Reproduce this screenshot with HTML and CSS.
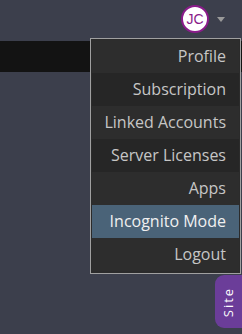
FILE: index.html
```html
<!DOCTYPE html>
<html lang="en">
<head>
    <meta charset="UTF-8">
    <meta name="viewport" content="width=device-width, initial-scale=1.0">
    <title>Account Menu</title>
    <link rel="stylesheet" href="styles.css">
</head>
<body>
    <div id="top-bar">
        <button id="user-button">
            <span class="avatar">JC</span>
            <span class="caret"></span>
        </button>
    </div>
    <div id="black-bar"></div>

    <div id="user-menu">
        <a href="#" class="menu-link">Profile</a>
        <a href="#" class="menu-link">Subscription</a>
        <a href="#" class="menu-link">Linked Accounts</a>
        <a href="#" class="menu-link">Server Licenses</a>
        <a href="#" class="menu-link">Apps</a>
        <a href="#" class="menu-link active">Incognito Mode</a>
        <a href="#" class="menu-link">Logout</a>
    </div>

    <div id="site-tab"><span>Site</span></div>
</body>
</html>
```

FILE: styles.css
```css
body {
    font-family: 'Open Sans', sans-serif;
    background-color: #3c3f4c;
    margin: 0;
    height: 334px;
    overflow: hidden;
}
#top-bar {
    height: 41px;
    display: flex;
    justify-content: flex-end;
    align-items: center;
    padding-right: 17px;
}
#user-button {
    display: flex;
    align-items: center;
    gap: 8px;
    background: transparent;
    border: none;
    padding: 0;
    margin-top: -3px;
    cursor: pointer;
}
.avatar {
    width: 24px;
    height: 24px;
    border: 2px solid #8a1c8a;
    border-radius: 50%;
    background-color: white;
    color: #8a1c8a;
    font-family: 'Liberation Sans', sans-serif;
    font-size: 14px;
    line-height: 24px;
    text-align: center;
}
.caret {
    width: 0;
    height: 0;
    border-left: 4px solid transparent;
    border-right: 4px solid transparent;
    border-top: 5px solid #9a9a9a;
}
#black-bar {
    height: 31px;
    background-color: #131313;
}

/* Dropdown menu */
#user-menu {
    position: absolute;
    top: 38px;
    left: 90px;
    width: 147px;
    padding: 1px 1px 2px 1px;
    background-color: #2b2b2b;
    border: 1px solid #a0a0a0;
    display: flex;
    flex-direction: column;
}
.menu-link {
    height: 33px;
    line-height: 33px;
    padding-right: 13px;
    text-align: right;
    font-size: 16px;
    color: #c6c6c6;
    text-decoration: none;
    background-color: #2d2d2d;
}
.menu-link:nth-child(even) {
    background-color: #262626;
}
.menu-link.active {
    background-color: #4a6378;
    color: #f0f0f0;
}

/* Site tab */
#site-tab {
    position: absolute;
    right: 0;
    top: 275px;
    width: 27px;
    height: 53px;
    background-color: #6b3d99;
    border-radius: 9px 0 0 9px;
    display: flex;
    align-items: center;
    justify-content: center;
}
#site-tab span {
    transform: rotate(-90deg);
    color: white;
    font-size: 13px;
    letter-spacing: 2px;
}
```
